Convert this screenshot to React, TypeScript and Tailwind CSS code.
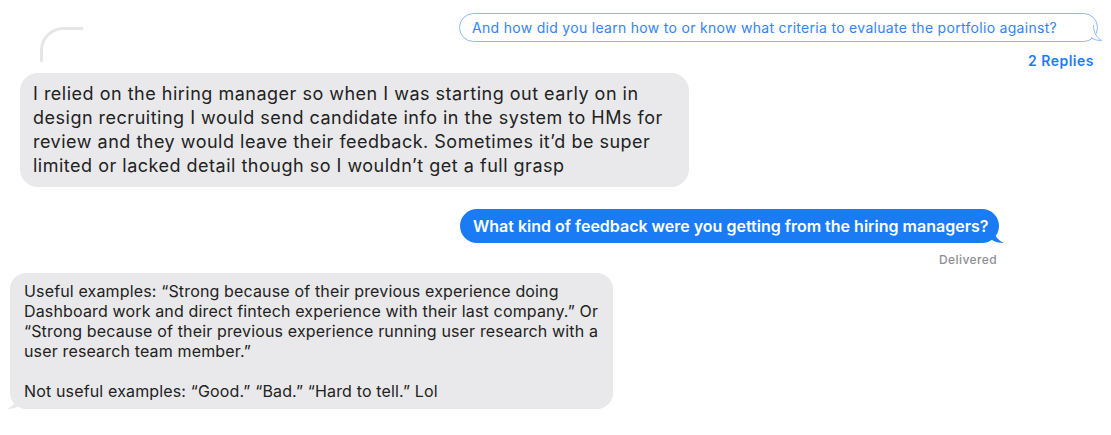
import React from "react";

const font = { fontFamily: 'Inter, "Liberation Sans", Arial, sans-serif' };

function TailRight({ color, outline }: { color: string; outline?: boolean }) {
  return (
    <svg
      className="absolute -right-[5px] bottom-0"
      width="12"
      height="16"
      viewBox="0 0 12 16"
    >
      {outline ? (
        <path
          d="M3.5 0 C3.5 7 6 12 11.5 15.5 C7 15.5 3.5 14.5 1 12.5"
          fill="#ffffff"
          stroke={color}
          strokeWidth="1"
        />
      ) : (
        <path d="M2 0 C2 8 5 13 12 16 C7 16 3 15 0 13 Z" fill={color} />
      )}
    </svg>
  );
}

function TailLeft({ color }: { color: string }) {
  return (
    <svg
      className="absolute -left-[3px] bottom-0"
      width="12"
      height="16"
      viewBox="0 0 12 16"
    >
      <path d="M10 0 C10 8 7 13 0 16 C5 16 9 15 12 13 Z" fill={color} />
    </svg>
  );
}

export default function App() {
  return (
    <div className="relative w-[1111px] h-[435px] bg-white overflow-hidden" style={font}>
      {/* thread connector arc */}
      <svg className="absolute left-0 top-0" width="100" height="70">
        <path
          d="M41.5 61 L41.5 50 A22 22 0 0 1 63.5 28.5 L82 28.5"
          fill="none"
          stroke="#e6e6e8"
          strokeWidth="3"
          strokeLinecap="round"
        />
      </svg>

      <div className="flex flex-col pt-[13px]">
        {/* outlined thread bubble */}
        <div className="flex justify-end pr-[13px]">
          <div className="relative h-[29px] w-[639px] rounded-[15px] border border-[#8db8f9] bg-white px-[12px] flex items-center">
            <span className="whitespace-nowrap text-[14px] tracking-[0.3px] text-[#3384f6]">
              And how did you learn how to or know what criteria to evaluate the portfolio against?
            </span>
            <TailRight color="#8db8f9" outline />
          </div>
        </div>

        <div className="flex justify-end pr-[17px] mt-[10px] h-[16px] items-center">
          <span className="text-[14px] font-semibold tracking-[0.5px] text-[#1f7cf5]">2 Replies</span>
        </div>

        {/* gray bubble 1 */}
        <div className="flex mt-[5px] pl-[20px]">
          <div className="w-[669px] h-[114px] rounded-[18px] bg-[#e9e9eb] pl-[13px] pr-[10px] py-[9px] text-[18px] leading-[24px] tracking-[0.5px] text-[#222222]">
            <div className="whitespace-nowrap">I relied on the hiring manager so when I was starting out early on in</div>
            <div className="whitespace-nowrap">design recruiting I would send candidate info in the system to HMs for</div>
            <div className="whitespace-nowrap">review and they would leave their feedback. Sometimes it’d be super</div>
            <div className="whitespace-nowrap">limited or lacked detail though so I wouldn’t get a full grasp</div>
          </div>
        </div>

        {/* blue bubble */}
        <div className="flex justify-end pr-[112px] mt-[22px]">
          <div className="relative h-[34px] w-[539px] rounded-[17px] bg-[#1a7bf5] px-[13px] flex items-center">
            <span className="whitespace-nowrap text-[16px] font-semibold text-white">
              What kind of feedback were you getting from the hiring managers?
            </span>
            <TailRight color="#1a7bf5" />
          </div>
        </div>

        <div className="flex justify-end pr-[114px] mt-[10px] h-[14px] items-center">
          <span className="text-[12px] font-medium tracking-[0.4px] text-[#8e8e93]">Delivered</span>
        </div>

        {/* gray bubble 2 */}
        <div className="flex mt-[6px] pl-[10px]">
          <div className="relative w-[603px] h-[136px] rounded-[16px] bg-[#e9e9eb] pl-[14px] pr-[10px] py-[8px] text-[16px] leading-[20px] tracking-[0.15px] text-[#222222]">
            <div className="whitespace-nowrap">Useful examples: “Strong because of their previous experience doing</div>
            <div className="whitespace-nowrap">Dashboard work and direct fintech experience with their last company.” Or</div>
            <div className="whitespace-nowrap">“Strong because of their previous experience running user research with a</div>
            <div className="whitespace-nowrap">user research team member.”</div>
            <div className="h-[20px]" />
            <div className="whitespace-nowrap">Not useful examples: “Good.” “Bad.” “Hard to tell.” Lol</div>
            <TailLeft color="#e9e9eb" />
          </div>
        </div>
      </div>
    </div>
  );
}
